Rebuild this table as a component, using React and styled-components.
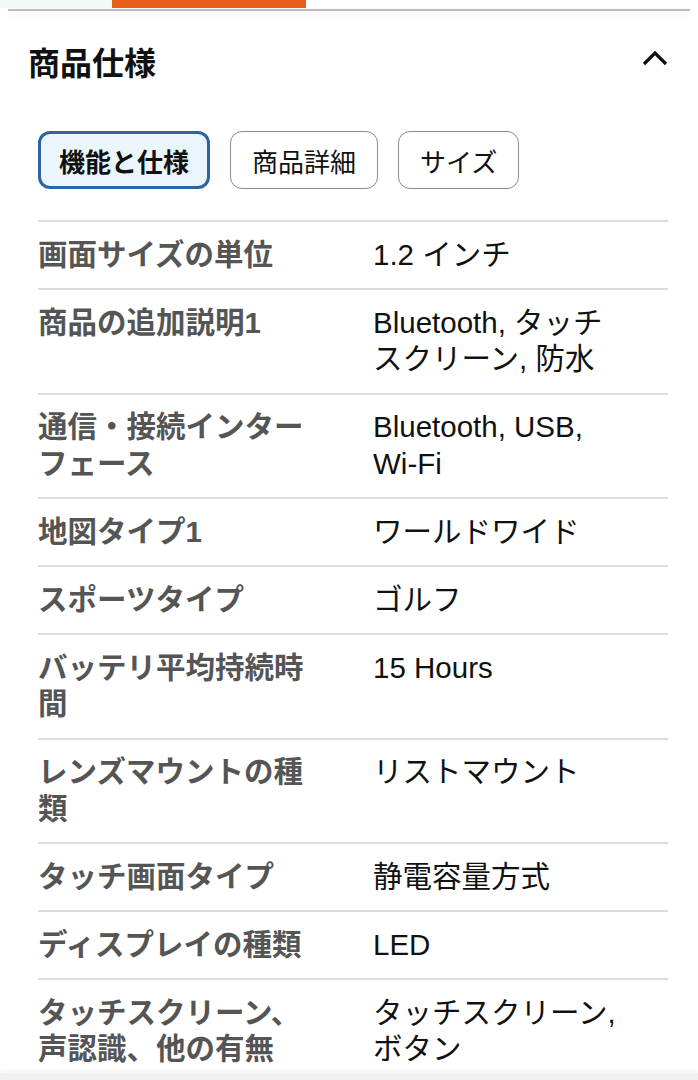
import React from "react";
import styled, { createGlobalStyle } from "styled-components";

const Global = createGlobalStyle`
  html, body { margin: 0; padding: 0; background: #fff; }
  body { font-family: "Noto Sans CJK JP", "Noto Sans", sans-serif; color: #111; }
`;

const Page = styled.div`
  width: 698px;
  min-height: 1080px;
  background: #fff;
`;

const TopStrip = styled.div`
  display: flex;
  height: 8px;
`;

const StripPart = styled.div`
  width: ${(p) => p.$w}px;
  flex: ${(p) => (p.$grow ? 1 : "none")};
  background: ${(p) => p.$c};
`;

const Rule = styled.div`
  margin: 1px 8px 0;
  height: 2px;
  background: #bcbcbc;
  box-shadow: 0 3px 6px rgba(0, 0, 0, 0.08);
`;

const Header = styled.div`
  display: flex;
  align-items: center;
  justify-content: space-between;
  padding: 28px 28px 0 28px;
  height: 44px;
`;

const Title = styled.h2`
  margin: 0;
  font-size: 32px;
  font-weight: 700;
  color: #111;
  line-height: 44px;
`;

const Chevron = styled.svg`
  width: 30px;
  height: 20px;
  margin-top: -6px;
`;

const Tabs = styled.div`
  display: flex;
  gap: 20px;
  padding: 48px 0 0 38px;
`;

const Tab = styled.button`
  box-sizing: border-box;
  height: 58px;
  padding: 0 ${(p) => (p.$active ? 18 : 21)}px;
  border-radius: 12px;
  border: ${(p) => (p.$active ? "3.5px solid #2b64a0" : "1.5px solid #8a8a8a")};
  background: ${(p) => (p.$active ? "#eaf5fc" : "#fff")};
  font-family: "Noto Sans CJK JP", sans-serif;
  font-size: 26px;
  font-weight: ${(p) => (p.$active ? 700 : 400)};
  color: #111;
  cursor: pointer;
`;

const Table = styled.div`
  margin: 31px 30px 0 38px;
  border-top: 2px solid #dcdcdc;
`;

const Row = styled.div`
  display: grid;
  grid-template-columns: 335px 1fr;
  padding: 14.75px 0;
  border-bottom: 2px solid #dcdcdc;
  line-height: 36.5px;
  font-size: 29.5px;
  font-family: "Liberation Sans", "Noto Sans CJK JP", sans-serif;
`;

const Label = styled.div`
  font-weight: 700;
  color: #555;
  padding-right: 50px;
`;

const Value = styled.div`
  font-weight: 400;
  color: #111;
  padding-right: 44px;
`;

const BottomShade = styled.div`
  position: fixed;
  left: 0;
  right: 0;
  bottom: 0;
  height: 7px;
  background: #f1f1f1;
  box-shadow: 0 -2px 4px rgba(0, 0, 0, 0.05);
`;

const rows = [
  ["画面サイズの単位", "1.2 インチ"],
  ["商品の追加説明1", "Bluetooth, タッチスクリーン, 防水"],
  ["通信・接続インターフェース", "Bluetooth, USB, Wi-Fi"],
  ["地図タイプ1", "ワールドワイド"],
  ["スポーツタイプ", "ゴルフ"],
  ["バッテリ平均持続時間", "15 Hours"],
  ["レンズマウントの種類", "リストマウント"],
  ["タッチ画面タイプ", "静電容量方式"],
  ["ディスプレイの種類", "LED"],
  ["タッチスクリーン、声認識、他の有無", "タッチスクリーン, ボタン"],
];

export default function App() {
  return (
    <Page>
      <Global />
      <TopStrip>
        <StripPart $w={112} $c="#f0fafa" />
        <StripPart $w={194} $c="#e85f1a" />
        <StripPart $grow $c="#fff" />
      </TopStrip>
      <Rule />
      <Header>
        <Title>商品仕様</Title>
        <Chevron viewBox="0 0 30 20">
          <path d="M4 16 L15 5 L26 16" fill="none" stroke="#111" strokeWidth="3.2" />
        </Chevron>
      </Header>
      <Tabs>
        <Tab $active>機能と仕様</Tab>
        <Tab>商品詳細</Tab>
        <Tab>サイズ</Tab>
      </Tabs>
      <Table>
        {rows.map(([k, v]) => (
          <Row key={k}>
            <Label>{k}</Label>
            <Value>{v}</Value>
          </Row>
        ))}
      </Table>
      <BottomShade />
    </Page>
  );
}
